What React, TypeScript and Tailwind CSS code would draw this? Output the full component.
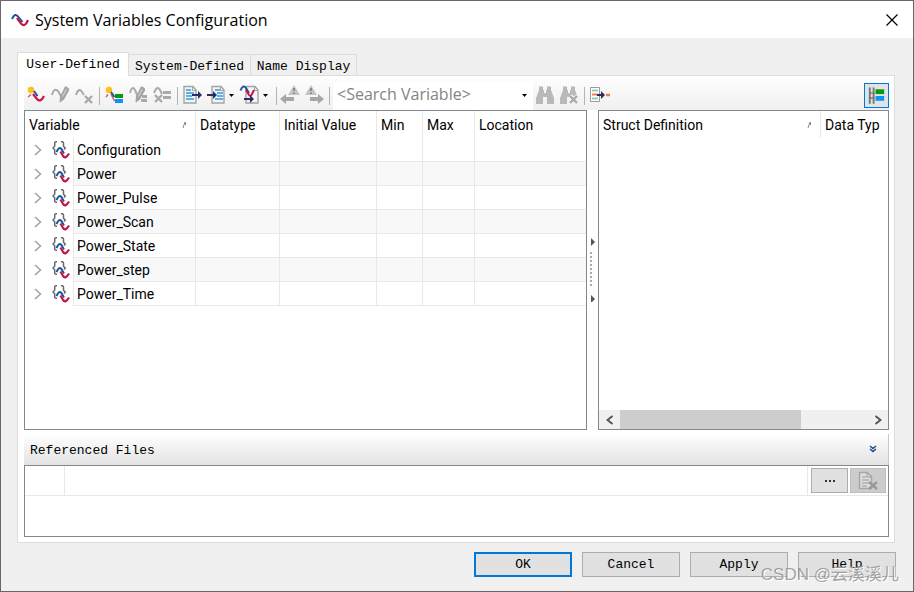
import type { ReactNode } from 'react'

const ui = "font-['Roboto','Noto_Sans',sans-serif]"
const title = "font-['Open_Sans','Noto_Sans',sans-serif]"
const mono = "font-['Liberation_Mono',monospace]"

const variables = ['Configuration', 'Power', 'Power_Pulse', 'Power_Scan', 'Power_State', 'Power_step', 'Power_Time']
const files = ['']

function Icon({ children }: { children: ReactNode }) {
  return (
    <svg width="24" height="24" viewBox="0 0 24 24" fill="none" aria-hidden="true">
      {children}
    </svg>
  )
}

function ToolButton({ label, children }: { label: string; children: ReactNode }) {
  return (
    <button type="button" aria-label={label} title={label} className="w-6 h-6 shrink-0">
      <Icon>{children}</Icon>
    </button>
  )
}

function Separator({ className = 'w-[7px]' }: { className?: string }) {
  return (
    <div className={`${className} shrink-0 flex justify-center`}>
      <div className="w-px h-[18px] bg-[#b4b4b4]" />
    </div>
  )
}

function DropArrow({ label, className = 'w-[7px]' }: { label: string; className?: string }) {
  return (
    <button type="button" aria-label={label} className={`${className} h-6 shrink-0 flex items-center justify-center`}>
      <svg width="5" height="3" viewBox="0 0 5 3" aria-hidden="true">
        <path d="M0 0h5L2.500 3z" fill="#000" />
      </svg>
    </button>
  )
}

function Cross({ x, y, s = 7 }: { x: number; y: number; s?: number }) {
  return <path d={`M${x} ${y}l${s} ${s}m0-${s}l-${s} ${s}`} stroke="#a9a9a9" strokeWidth="2.400" />
}

function Pencil({ x }: { x: number }) {
  return (
    <g transform={`translate(${x} 2)`}>
      <path d="M6 .5h1.500l2.500 2v2L5 13.500 1 16.500.5 16 1 10.500z" fill="#a3a3a3" />
      <path d="M3.500 10.500L7.500 3" stroke="#d0d0d0" strokeWidth="1.200" />
    </g>
  )
}

function Sheet({ x }: { x: number }) {
  return (
    <g transform={`translate(${x} 2)`}>
      <path d="M1 .5h9l3 3.500v13H1z" fill="#f4f4f4" stroke="#a4a4a4" strokeWidth="1.400" />
      <path d="M9.500 1v3.500H13" stroke="#a4a4a4" />
    </g>
  )
}

function Arrow({ x, y, w = 9, color = '#2d2a62' }: { x: number; y: number; w?: number; color?: string }) {
  return <path d={`M${x} ${y - 1}h${w - 4}v-3l4 4l-4 4v-3h-${w - 4}z`} fill={color} />
}

function Binoculars() {
  return (
    <path
      d="M6 2.500h4v3.500h1v3h2V6h1V2.500h4V6l3 8v6h-7v-7h-4v7H3v-6l3-8z"
      fill="#b9b9b9"
    />
  )
}

function BraceIcon() {
  return (
    <svg width="18" height="18" viewBox="0 0 18 18" fill="none" aria-hidden="true">
      <path d="M5 .7H4Q2.700.7 2.700 2v3.200L1 7l1.700 1.700V12Q2.700 13.300 4 13.300h1M9 .7h1Q11.500.7 11.500 2v3.200L13.300 7 12 8.500" stroke="#6a6a6a" strokeWidth="1.500" />
      <path d="M4.500 11Q7.500 4.500 9.700 8.500l2.300 4" stroke="#1d559c" strokeWidth="2" />
      <path d="M8.500 10.500l2.500 4.500Q13.500 18.500 17 12.500" stroke="#c5164c" strokeWidth="2.200" />
    </svg>
  )
}

function Chevron() {
  return (
    <svg width="8" height="12" viewBox="0 0 8 12" fill="none" aria-hidden="true">
      <path d="M1 1l5.500 5L1 11" stroke="#a0a0a0" strokeWidth="1.500" />
    </svg>
  )
}

function SortMark() {
  return (
    <svg width="5" height="8" viewBox="0 0 5 8" aria-hidden="true">
      <path d="M1 7l2-6M3.500 1v3" stroke="#888" />
    </svg>
  )
}

function Toolbar() {
  return (
    <div role="toolbar" className="h-8 flex items-center pt-[3px] bg-gradient-to-b from-[#fdfdfd] to-[#f0f0f0]">
      <ToolButton label="New variable">
        <circle cx="7" cy="6" r="3.200" fill="#fdc110" />
        <path d="M4 13l3-2.500" stroke="#d5577c" strokeWidth="1.500" />
        <path d="M10 7l3.500 5" stroke="#1d559c" strokeWidth="2" />
        <path d="M9 10l4 5Q16.500 19 20 12" stroke="#c5164c" strokeWidth="2.200" />
      </ToolButton>
      <ToolButton label="Edit variable">
        <path d="M4 11Q6 3 10 7l3 5" stroke="#a9a9a9" strokeWidth="2" />
        <Pencil x={11} />
      </ToolButton>
      <ToolButton label="Delete variable">
        <path d="M4 11Q6.500 3 10 8l2 3" stroke="#a9a9a9" strokeWidth="2" />
        <Cross x={13} y={12} />
      </ToolButton>
      <Separator />
      <ToolButton label="New struct">
        <circle cx="6" cy="6" r="3.200" fill="#fdc110" />
        <path d="M3 13l2-2.500M8 10l3.500 7" stroke="#d5577c" strokeWidth="1.500" />
        <path d="M8 8l3.500 5" stroke="#1d559c" strokeWidth="2" />
        <path d="M12 10h8v4h-8z" fill="#079a07" />
        <path d="M12 15h8v4h-8z" fill="#0b96f5" />
      </ToolButton>
      <ToolButton label="Edit struct">
        <path d="M3 9Q5 1 8 6l3 7" stroke="#a9a9a9" strokeWidth="2" />
        <path d="M15 11h5v3h-5zM14 15h6v3h-6z" fill="#a9a9a9" />
        <Pencil x={8} />
      </ToolButton>
      <ToolButton label="Delete struct">
        <path d="M3 9Q6 1 9 6l2 4" stroke="#a9a9a9" strokeWidth="2" />
        <path d="M12 7h8v3h-8zM12 12h8v3h-8z" fill="#a9a9a9" />
        <Cross x={4} y={11} />
      </ToolButton>
      <Separator className="w-[5px]" />
      <ToolButton label="Export">
        <Sheet x={3} />
        <path d="M6 6h5M6 9h8M6 12h6M6 15h8" stroke="#2b9be8" strokeWidth="1.400" />
        <Arrow x={12} y={11} w={10} />
      </ToolButton>
      <ToolButton label="Import">
        <Sheet x={7} />
        <path d="M11 6h5M13 9h6M13 12h6M11 15h8" stroke="#2b9be8" strokeWidth="1.400" />
        <Arrow x={3} y={11} w={10} />
      </ToolButton>
      <DropArrow label="Import options" />
      <div className="w-[3px]" />
      <ToolButton label="Import signals">
        <Sheet x={7} />
        <path d="M2.500 6.500Q5 0 8 4l3 5" stroke="#1d559c" strokeWidth="2" />
        <path d="M8 6l3 5q1.500 2 3-1l2-4" stroke="#c5164c" strokeWidth="2" />
        <Arrow x={6} y={15} w={10} />
      </ToolButton>
      <DropArrow label="Signal options" />
      <Separator className="w-[9px] pl-1.5" />
      <ToolButton label="Previous warning">
        <path d="M16 1l6 10H10z" fill="#c4c4c4" />
        <path d="M16 4v3M16 8.500v1.500" stroke="#777" strokeWidth="1.500" />
        <path d="M2 15l6-5v3h8v4H8v3z" fill="#a6a6a6" />
      </ToolButton>
      <ToolButton label="Next warning">
        <path d="M9 1l6 10H3z" fill="#c4c4c4" />
        <path d="M9 4v3M9 8.500v1.500" stroke="#777" strokeWidth="1.500" />
        <path d="M22 15l-6-5v3H8v4h8v3z" fill="#a6a6a6" />
      </ToolButton>
      <Separator />
      <div className="w-[200px] h-7 flex items-center bg-white">
        <input
          type="text"
          aria-label="Search variable"
          placeholder="<Search Variable>"
          className={`${title} w-[183px] pl-1 pb-1 text-base leading-6 placeholder:text-[#848484] outline-none`}
        />
        <DropArrow label="Search history" className="w-[17px]" />
      </div>
      <ToolButton label="Find">
        <Binoculars />
      </ToolButton>
      <ToolButton label="Clear search">
        <Binoculars />
        <path d="M13 12l8 8m0-8l-8 8" stroke="#f4f4f4" strokeWidth="5" />
        <Cross x={13} y={12} />
      </ToolButton>
      <Separator />
      <ToolButton label="Move struct">
        <path d="M2.500 3.500h9v14h-9z" fill="#fff" stroke="#9a9a9a" />
        <path d="M4 6.500h6M4 14.500h6" stroke="#8fd0b4" strokeWidth="2" />
        <path d="M4 10.500h6" stroke="#f47b4d" strokeWidth="2" />
        <Arrow x={9} y={11} w={8} />
        <path d="M18 11h4" stroke="#f47b4d" strokeWidth="2.500" />
      </ToolButton>
      <button
        type="button"
        aria-label="Show struct definitions"
        aria-pressed="true"
        className="ml-auto w-[25px] h-[25px] flex items-center justify-center border border-[#0078d7] bg-[#e0e3e8]"
      >
        <Icon>
          <path d="M5 3v17M9 3v17" stroke="#777" strokeWidth="2" />
          <path d="M5 9h5M5 14h5" stroke="#777" strokeWidth="1.500" />
          <path d="M11 5h9v5h-9z" fill="#079a07" />
          <path d="M11 12h9v5h-9z" fill="#0b96f5" />
        </Icon>
      </button>
    </div>
  )
}

function VariableTable() {
  const cell = 'border-r border-b border-[#e8e8e8]'
  const head = 'border-r border-[#e8e8e8] pl-1 text-left font-normal whitespace-nowrap'

  return (
    <div className="flex-1 min-w-0 overflow-hidden border border-[#828790] bg-white">
      <table className="w-full table-fixed border-separate border-spacing-0 text-sm leading-5">
        <colgroup>
          <col className="w-[49px]" />
          <col className="w-[122px]" />
          <col className="w-[84px]" />
          <col className="w-[97px]" />
          <col className="w-[46px]" />
          <col className="w-[52px]" />
          <col />
        </colgroup>
        <thead>
          <tr className="h-[27px]">
            <th colSpan={2} className={head}>
              <div className="flex items-center justify-between pr-2">
                Variable
                <SortMark />
              </div>
            </th>
            <th className={head}>Datatype</th>
            <th className={head}>Initial Value</th>
            <th className={head}>Min</th>
            <th className={head}>Max</th>
            <th className="pl-1 text-left font-normal">Location</th>
          </tr>
        </thead>
        <tbody>
          {variables.map((name) => (
            <tr key={name} className="h-6 group">
              <td className="p-0 border-r border-[#e8e8e8]">
                <div className="flex items-center pl-[9px]">
                  <button type="button" aria-label={`Expand ${name}`} className="w-[18px] h-[18px] flex items-center">
                    <Chevron />
                  </button>
                  <BraceIcon />
                </div>
              </td>
              <td className={`${cell} p-0 pl-[3px] group-even:bg-[#f8f8f8]`}>{name}</td>
              <td className={`${cell} group-even:bg-[#f8f8f8]`} />
              <td className={`${cell} group-even:bg-[#f8f8f8]`} />
              <td className={`${cell} group-even:bg-[#f8f8f8]`} />
              <td className={`${cell} group-even:bg-[#f8f8f8]`} />
              <td className="border-b border-[#e8e8e8] group-even:bg-[#f8f8f8]" />
            </tr>
          ))}
        </tbody>
      </table>
    </div>
  )
}

function Splitter() {
  return (
    <div role="separator" aria-orientation="vertical" className="w-[11px] shrink-0 flex items-center justify-center">
      <svg width="5" height="64" viewBox="0 0 5 64" aria-hidden="true">
        <path d="M1 0l4 4l-4 4zM1 57l4 4l-4 4z" fill="#555" />
        <path d="M1 14v36" stroke="#aaa" strokeWidth="2" strokeDasharray="2 2" />
      </svg>
    </div>
  )
}

function StructPanel() {
  return (
    <div className="w-[291px] shrink-0 flex flex-col border border-[#828790] bg-white">
      <div className="flex-1 overflow-hidden">
        <table className="w-full table-fixed border-separate border-spacing-0 text-sm leading-5">
          <thead>
            <tr className="h-[27px]">
              <th className="w-[222px] pl-1 text-left font-normal border-r border-[#e8e8e8]">
                <div className="flex items-center justify-between pr-2">
                  Struct Definition
                  <SortMark />
                </div>
              </th>
              <th className="pl-1 text-left font-normal whitespace-nowrap">Data Typ</th>
            </tr>
          </thead>
        </table>
      </div>
      <div className="h-[19px] flex bg-[#f0f0f0]">
        <button type="button" aria-label="Scroll left" className="w-[21px] flex items-center justify-center">
          <svg width="8" height="10" viewBox="0 0 8 10" fill="none" aria-hidden="true">
            <path d="M6.500 1l-5 4l5 4" stroke="#555" strokeWidth="2" />
          </svg>
        </button>
        <div className="flex-1">
          <div className="w-[181px] h-full bg-[#cdcdcd]" />
        </div>
        <button type="button" aria-label="Scroll right" className="w-[21px] flex items-center justify-center">
          <svg width="8" height="10" viewBox="0 0 8 10" fill="none" aria-hidden="true">
            <path d="M1.500 1l5 4l-5 4" stroke="#555" strokeWidth="2" />
          </svg>
        </button>
      </div>
    </div>
  )
}

function ReferencedFiles() {
  return (
    <section className="mt-1">
      <h2 className={`${mono} h-[31px] flex items-center justify-between pt-0.5 pl-1.5 pr-[11px] text-[13px] leading-5 bg-gradient-to-b from-white to-[#e2e2e2] border-r border-[#c8c8c8]`}>
        Referenced Files
        <button type="button" aria-label="Collapse referenced files" className="pb-1">
          <svg width="8" height="8" viewBox="0 0 8 8" fill="none" aria-hidden="true">
            <path d="M1 1l3 2.500L7 1M1 4l3 2.500L7 4" stroke="#1d4a94" strokeWidth="1.500" />
          </svg>
        </button>
      </h2>
      <div className="h-[72px] border border-[#828790] bg-white">
        {files.map((file, i) => (
          <div key={i} className="h-[30px] flex border-b border-[#e8e8e8]">
            <div className="w-10 border-r border-[#e8e8e8]" />
            <input type="text" aria-label="File path" defaultValue={file} className="flex-1 min-w-0 px-1 outline-none" />
            <div className="flex gap-0.5 items-center pl-[3px] pr-0.5 border-l border-[#e8e8e8]">
              <button type="button" aria-label="Browse" className="w-[37px] h-[25px] flex items-center justify-center border border-[#adadad] bg-[#e1e1e1]">
                <svg width="10" height="2" viewBox="0 0 10 2" aria-hidden="true">
                  <path d="M0 0h2v2H0zM4 0h2v2H4zM8 0h2v2H8z" fill="#333" />
                </svg>
              </button>
              <button type="button" aria-label="Remove file" disabled className="w-9 h-[25px] flex items-center justify-center border border-[#bfbfbf] bg-[#cccccc]">
                <svg width="20" height="20" viewBox="0 0 20 20" fill="none" aria-hidden="true">
                  <path d="M1.500 1.500h8l4 4v12h-12z" fill="#ddd" stroke="#a6a6a6" strokeWidth="1.500" />
                  <path d="M9 2v4h4M4 6h4M4 9h7M4 12h7M4 15h5" stroke="#999" />
                  <path d="M11 11l8 7M19 11l-8 7" stroke="#999" strokeWidth="2.500" />
                </svg>
              </button>
            </div>
          </div>
        ))}
      </div>
    </section>
  )
}

function DialogButton({ label, primary = false }: { label: string; primary?: boolean }) {
  return (
    <button
      type="button"
      className={`${mono} w-[98px] h-[25px] text-[13px] leading-4 bg-[#e1e1e1] ${primary ? 'border-2 border-[#0078d7]' : 'border border-[#adadad]'}`}
    >
      {label}
    </button>
  )
}

export default function App() {
  return (
    <div className={`${ui} relative min-h-screen flex flex-col border border-[#68686c] bg-[#f0f0f0] text-black`}>
      <header className="h-[37px] flex items-center bg-white pl-2.5 pr-[15px]">
        <svg width="18" height="14" viewBox="0 0 18 14" fill="none" aria-hidden="true">
          <path d="M1 6Q4-1 7.500 4l4 5" stroke="#1d559c" strokeWidth="2" />
          <path d="M6 5l4 5.500Q14 15 17 7" stroke="#c5164c" strokeWidth="2.200" />
        </svg>
        <h1 className={`${title} ml-1.5 text-base leading-6`}>System Variables Configuration</h1>
        <button type="button" aria-label="Close" className="ml-auto">
          <svg width="12" height="12" viewBox="0 0 12 12" fill="none" aria-hidden="true">
            <path d="M.5.5l11 11M11.500.5l-11 11" stroke="#000" strokeWidth="1.200" />
          </svg>
        </button>
      </header>

      <main className="flex-1 flex flex-col pt-3.5 pl-4 pr-[18px]">
        <div role="tablist" className={`${mono} flex items-end text-[13px] leading-5`}>
          <button type="button" role="tab" aria-selected="true" className="relative -mb-px w-28 h-6 bg-white border border-b-0 border-[#dcdcdc]">
            User-Defined
          </button>
          <button type="button" role="tab" aria-selected="false" className="w-[122px] h-[21px] pt-0.5 border-t border-r border-[#dcdcdc]">
            System-Defined
          </button>
          <button type="button" role="tab" aria-selected="false" className="w-[106px] h-[21px] pt-0.5 border-t border-r border-[#dcdcdc]">
            Name Display
          </button>
        </div>

        <div className="flex-1 flex flex-col bg-white border border-[#dcdcdc] pt-0.5 pb-[5px] pl-1.5 pr-[5px]">
          <Toolbar />
          <div className="flex-1 min-h-[240px] flex">
            <VariableTable />
            <Splitter />
            <StructPanel />
          </div>
          <ReferencedFiles />
        </div>
      </main>

      <footer className="flex justify-end gap-2.5 pt-[9px] pb-3.5 pr-[17px]">
        <DialogButton label="OK" primary />
        <DialogButton label="Cancel" />
        <DialogButton label="Apply" />
        <DialogButton label="Help" />
      </footer>

      <div className="absolute right-3.5 bottom-1 pointer-events-none font-['Liberation_Sans','Noto_Sans_CJK_SC',sans-serif] text-[17px] leading-6 text-[#8c8c8c]/80 [text-shadow:1px_1px_0_#fff]">
        CSDN @云溪溪儿
      </div>
    </div>
  )
}
